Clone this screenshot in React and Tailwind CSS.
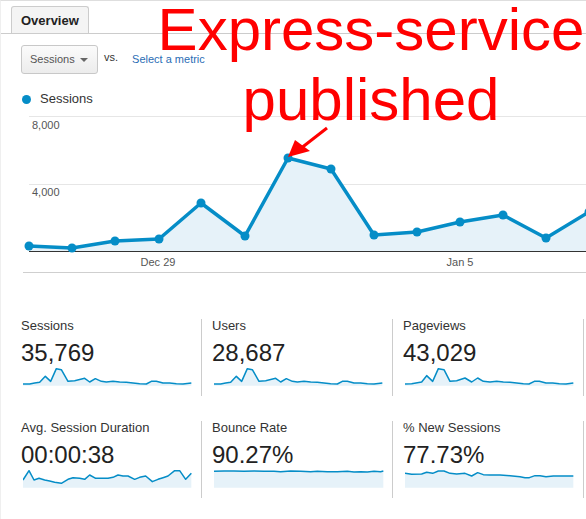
const blue = "#058dc7";
const fill = "#e6f2f9";

const chartPts = [
  [28, 138], [71, 140], [114, 133], [158, 131], [200, 95], [244, 128], [287, 50],
  [330, 61], [373, 127], [416, 124], [459, 114], [502, 107], [545, 130], [588, 104],
];

const sessionsSpark = [
  [0, 51], [20, 51], [35, 48], [50, 46], [67, 28], [83, 43], [100, 5], [115, 8], [135, 43],
  [155, 41], [185, 34], [200, 45], [217, 35], [235, 43], [250, 45], [270, 43], [290, 45],
  [310, 46], [330, 48], [350, 50], [370, 51], [385, 43], [400, 43], [420, 48], [440, 48],
  [460, 50], [480, 51], [505, 48],
];

const pageviewsSpark = [
  [0, 51], [20, 50], [50, 45], [65, 26], [83, 43], [100, 5], [117, 8], [135, 43], [155, 41],
  [180, 33], [200, 45], [218, 33], [235, 43], [255, 45], [275, 43], [295, 45], [315, 46],
  [335, 48], [355, 50], [372, 51], [388, 43], [403, 43], [423, 48], [443, 48], [463, 50],
  [483, 51], [505, 48],
];

const durationSpark = [
  [0, 33], [18, 5], [33, 33], [48, 28], [65, 33], [80, 36], [95, 40], [115, 43], [135, 31],
  [150, 26], [170, 28], [185, 31], [200, 18], [218, 28], [235, 28], [255, 28], [270, 25],
  [285, 18], [300, 21], [315, 21], [335, 31], [350, 25], [368, 21], [388, 38], [405, 31],
  [420, 26], [435, 21], [455, 5], [470, 5], [488, 31], [505, 13],
];

const bounceSpark = [
  [0, 7], [30, 6], [60, 6], [90, 7], [120, 6], [150, 7], [180, 7], [200, 8], [230, 6],
  [260, 7], [290, 8], [310, 7], [340, 8], [370, 8], [400, 7], [420, 9], [440, 8], [460, 9],
  [480, 7], [500, 8], [508, 6],
];

const newSessionsSpark = [
  [0, 13], [20, 16], [50, 15], [65, 10], [83, 13], [100, 6], [117, 6], [135, 13], [155, 15],
  [180, 13], [200, 21], [218, 11], [235, 17], [255, 18], [285, 18], [315, 20], [345, 23],
  [360, 26], [373, 26], [390, 20], [405, 20], [423, 23], [445, 21], [475, 21], [505, 21],
];

const metrics = [
  { label: "Sessions", value: "35,769", spark: sessionsSpark },
  { label: "Users", value: "28,687", spark: sessionsSpark },
  { label: "Pageviews", value: "43,029", spark: pageviewsSpark },
  { label: "Avg. Session Duration", value: "00:00:38", spark: durationSpark },
  { label: "Bounce Rate", value: "90.27%", spark: bounceSpark },
  { label: "% New Sessions", value: "77.73%", spark: newSessionsSpark },
];

function toStr(pts) {
  return pts.map((p) => p[0] + "," + p[1]).join(" ");
}

function Sparkline({ pts }) {
  const last = pts[pts.length - 1][0];
  const area = toStr(pts) + ` ${last},56 0,56`;
  return (
    <svg width="170" height="20" viewBox="0 0 510 60" preserveAspectRatio="none" className="block ml-[2px]">
      <polygon points={area} fill={fill} />
      <polyline
        points={toStr(pts)}
        fill="none"
        stroke={blue}
        strokeWidth="1.5"
        strokeLinejoin="round"
        vectorEffect="non-scaling-stroke"
      />
    </svg>
  );
}

function MainChart() {
  const area = toStr(chartPts) + " 588,143 28,143";
  return (
    <svg width="586" height="168" className="block">
      <line x1="28" y1="8.5" x2="586" y2="8.5" stroke="#e6e6e6" />
      <line x1="28" y1="76.5" x2="586" y2="76.5" stroke="#e6e6e6" />
      <text x="31" y="21" fontSize="11" fill="#555" fontFamily="'Liberation Sans', Arial, sans-serif">8,000</text>
      <text x="31" y="88" fontSize="11" fill="#555" fontFamily="'Liberation Sans', Arial, sans-serif">4,000</text>
      <polygon points={area} fill={fill} />
      <line x1="28" y1="143.5" x2="586" y2="143.5" stroke="#333" />
      <polyline points={toStr(chartPts)} fill="none" stroke={blue} strokeWidth="3.5" strokeLinejoin="round" />
      {chartPts.map((p, i) => (
        <circle key={i} cx={p[0]} cy={p[1]} r="4.5" fill={blue} />
      ))}
      <text x="157" y="158" fontSize="11" fill="#555" textAnchor="middle" fontFamily="'Liberation Sans', Arial, sans-serif">Dec 29</text>
      <text x="459" y="158" fontSize="11" fill="#555" textAnchor="middle" fontFamily="'Liberation Sans', Arial, sans-serif">Jan 5</text>
      <line x1="22" y1="164.5" x2="586" y2="164.5" stroke="#cfcfcf" />
    </svg>
  );
}

export default function App() {
  return (
    <div className="relative w-[586px] h-[519px] overflow-hidden bg-white border-t border-l border-t-[#dedede] border-l-[#efefef] font-['Liberation_Sans',Arial,sans-serif] text-[#333]">
      {/* tab bar */}
      <div className="h-[33px] border-b border-[#cccccc] flex items-end">
        <div className="ml-[10px] h-[27px] px-[9px] border border-b-0 border-[#cccccc] rounded-t-[3px] bg-[#f4f4f4] text-[13px] font-bold leading-[27px] text-[#222]">
          Overview
        </div>
      </div>

      {/* metric picker */}
      <div className="mt-[11px] ml-[20px] flex items-center h-[29px]">
        <div className="w-[77px] h-[29px] border border-[#c8c8c8] rounded-[3px] bg-gradient-to-b from-[#fbfbfb] to-[#ececec] flex items-center justify-between pl-[8px] pr-[9px] text-[11px] text-[#555]">
          <span>Sessions</span>
          <span className="w-0 h-0 border-l-[4px] border-r-[4px] border-t-[4px] border-l-transparent border-r-transparent border-t-[#666]" />
        </div>
        <span className="ml-[6px] -mt-[4px] text-[11px] text-[#333]">vs.</span>
        <span className="ml-[14px] text-[11px] text-[#2a6db5]">Select a metric</span>
      </div>

      {/* legend */}
      <div className="mt-[16px] ml-[21px] h-[18px] flex items-center">
        <span className="w-[9px] h-[9px] rounded-full bg-[#058dc7]" />
        <span className="ml-[9px] text-[13px] text-[#333]">Sessions</span>
      </div>

      <MainChart />

      {/* scorecards */}
      <div className="mt-[43px] ml-[10px] grid grid-cols-[191px_191px_191px] gap-y-[25px]">
        {metrics.map((m) => (
          <div key={m.label} className="h-[77px] border-r border-[#cccccc] pl-[10px]">
            <div className="text-[13px] leading-[16px] text-[#333] -mt-[1px]">{m.label}</div>
            <div className="mt-[5px] text-[24px] leading-[28px] text-[#222]">{m.value}</div>
            <Sparkline pts={m.spark} />
          </div>
        ))}
      </div>

      {/* annotation */}
      <div className="absolute top-0 left-[155px] w-[430px] text-center text-[60px] leading-[58px] text-[#ff0000] whitespace-nowrap">
        <div>Express-service</div>
        <div className="mt-[12px]">published</div>
      </div>
      <svg className="absolute left-0 top-0" width="586" height="200">
        <line x1="326" y1="127" x2="299" y2="148" stroke="#ff0000" strokeWidth="3" />
        <polygon points="287,156 294,139 309,150" fill="#ff0000" />
      </svg>
    </div>
  );
}
